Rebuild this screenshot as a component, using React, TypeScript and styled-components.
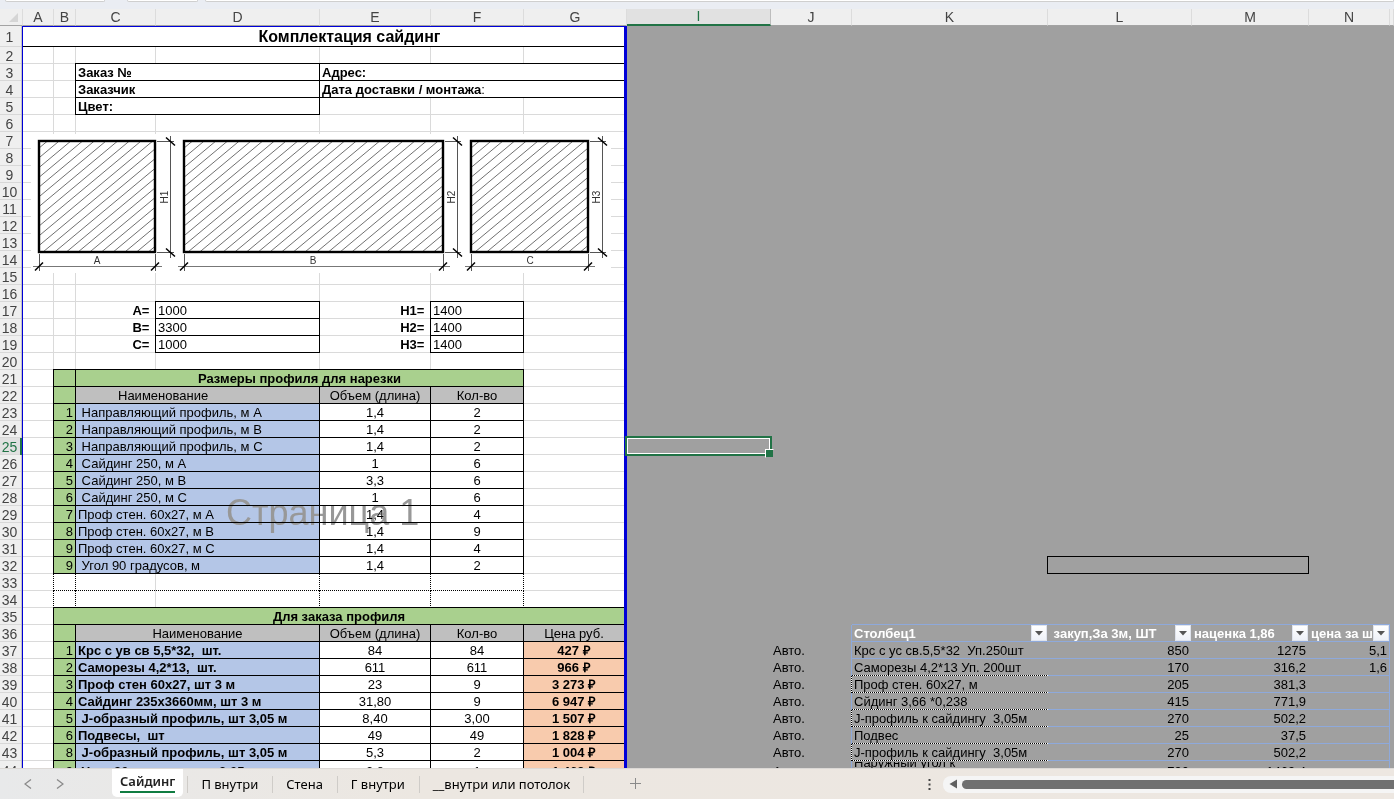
import React from 'react';
import styled, { createGlobalStyle, css } from 'styled-components';

const GlobalStyle = createGlobalStyle`
  * { box-sizing: border-box; }
  body { margin: 0; background: #a0a0a0; }
  button { font: inherit; padding: 0; border: 0; background: none; cursor: pointer; }
`;

const sheetFont = '"Liberation Sans", Arial, sans-serif';
const uiFont = '"Noto Sans", "Open Sans", sans-serif';

type Line = 'grid' | 'black' | 'dots' | 'blue' | 'page' | 'none';

const lineColor: Record<Line, string> = {
  grid: '#dadada',
  black: '#000',
  dots: 'transparent',
  blue: '#8ea9db',
  page: '#0000d8',
  none: 'transparent',
};

const fills = {
  green: '#a9d08e',
  grey: '#bfbfbf',
  sky: '#b4c6e7',
  peach: '#f8cbad',
  white: '#fff',
  outside: '#a0a0a0',
};

/* ---------- layout ---------- */

const Page = styled.div`
  display: flex;
  flex-direction: column;
  height: 100vh;
  overflow: hidden;
  font-family: ${sheetFont};
  color: #000;
`;

const FormulaStrip = styled.div`
  display: flex;
  flex: none;
  gap: 7px;
  height: 9px;
  padding-left: 5px;
  background: #eaedf3;
`;

const StripBox = styled.div<{ $width?: number; $after?: number }>`
  flex: ${(p) => (p.$width ? 'none' : '1')};
  width: ${(p) => (p.$width ? `${p.$width}px` : 'auto')};
  margin-right: ${(p) => p.$after ?? 0}px;
  height: 2px;
  background: #fff;
  border: 1px solid #cfcfcf;
  border-top: 0;
  border-radius: 0 0 4px 4px;
`;

const Sheet = styled.main`
  position: relative;
  flex: 1;
  min-height: 0;
  overflow: hidden;
  background: ${fills.outside};
`;

const Grid = styled.table`
  width: 100%;
  min-width: 1392px;
  table-layout: fixed;
  border-collapse: separate;
  border-spacing: 0;
  font-size: 13px;
  line-height: 15px;
`;

const Col = styled.col<{ $width?: number }>`
  width: ${(p) => (p.$width ? `${p.$width}px` : 'auto')};
`;

const Row = styled.tr<{ $height?: number }>`
  height: ${(p) => p.$height ?? 17}px;
`;

const ColumnHead = styled.th<{ $active?: boolean }>`
  height: 17px;
  padding: 0;
  font-size: 14px;
  line-height: 15px;
  font-weight: 400;
  color: ${(p) => (p.$active ? '#217346' : '#444')};
  background: ${(p) => (p.$active ? '#e1e1e1' : '#efefef')};
  border-right: 1px solid ${(p) => (p.$active ? '#bdbdbd' : '#dcdcdc')};
  border-bottom: ${(p) => (p.$active ? '2px solid #217346' : '1px solid #a3a3a3')};
`;

const RowHead = styled.th<{ $active?: boolean }>`
  padding: 1px 3px 0 0;
  font-size: 14px;
  font-weight: 400;
  text-align: center;
  color: ${(p) => (p.$active ? '#217346' : '#444')};
  background: ${(p) => (p.$active ? '#e1e1e1' : '#efefef')};
  border-right: 1px solid ${lineColor.page};
  box-shadow: ${(p) => (p.$active ? 'inset -2px 0 #217346' : 'inset -1px 0 #c4c4c4')}, inset 0 -1px #d8d8d8;
`;

/* Cell edges are painted as background layers so that crossing lines meet squarely */
const bottomEdge = (line: Line) =>
  line === 'dots'
    ? 'repeating-linear-gradient(90deg, #000 0 1px, #fff 1px 2px) left bottom / 100% 1px no-repeat border-box'
    : `linear-gradient(${lineColor[line]}, ${lineColor[line]}) left bottom / 100% 1px no-repeat border-box`;

const rightEdge = (line: Line) =>
  line === 'dots'
    ? 'repeating-linear-gradient(0deg, #000 0 1px, #fff 1px 2px) right top / 1px 100% no-repeat border-box'
    : `linear-gradient(${lineColor[line]}, ${lineColor[line]}) right top / ${line === 'page' ? 3 : 1}px 100% no-repeat border-box`;

const cornerDot = 'linear-gradient(#000, #000) right bottom / 1px 1px no-repeat border-box';

interface CellLook {
  $right?: Line;
  $bottom?: Line;
  $top?: Line;
  $corner?: boolean;
  $fill?: keyof typeof fills;
  $align?: 'left' | 'center' | 'right';
  $bold?: boolean;
  $indent?: number;
}

const edges = ({ $right = 'grid', $bottom = 'grid', $corner, $fill = 'white' }: CellLook) => {
  const pair =
    $right !== 'page' && $bottom === 'black'
      ? [bottomEdge($bottom), rightEdge($right)]
      : [rightEdge($right), bottomEdge($bottom)];
  const fill = `linear-gradient(${fills[$fill]}, ${fills[$fill]}) border-box`;
  return [...($corner ? [cornerDot] : []), ...pair, fill].join(', ');
};

const Cell = styled.td<CellLook>`
  padding: 1px 2px 0 ${(p) => p.$indent ?? 2}px;
  white-space: pre;
  overflow: hidden;
  vertical-align: middle;
  text-align: ${(p) => p.$align ?? 'left'};
  font-weight: ${(p) => (p.$bold ? 700 : 400)};
  border: 0 solid transparent;
  border-right-width: ${(p) => (p.$right === 'page' ? 3 : 1)}px;
  border-bottom-width: 1px;
  background: ${edges};
  background-origin: border-box;
  ${(p) => p.$top && css`box-shadow: inset 0 1px ${lineColor[p.$top]};`}
`;

const Title = styled(Cell)`
  font-size: 16px;
  line-height: 18px;
`;

const Regular = styled.span`
  font-weight: 400;
`;

const SelectedCell = styled.td`
  position: relative;
  z-index: 3;
  padding: 0;
`;

const Selection = styled.div`
  position: absolute;
  inset: -2px -1px -1px -2px;
  border: 2px solid #217346;
  box-shadow: inset 0 0 0 1px #fff;

  &::after {
    content: '';
    position: absolute;
    right: -4px;
    bottom: -4px;
    width: 7px;
    height: 7px;
    background: #217346;
    border: 1px solid #fff;
    border-right-color: ${fills.outside};
    border-bottom-color: ${fills.outside};
  }
`;

const FilterCell = styled(Cell)`
  padding: 0;
`;

const FilterHead = styled.div`
  display: flex;
  height: 16px;
  padding-left: 2px;
  line-height: 17px;
  color: #fff;
`;

const FilterLabel = styled.span`
  flex: 1;
  min-width: 0;
  overflow: hidden;
`;

const FilterButton = styled.button`
  display: grid;
  place-items: center;
  flex: none;
  width: 16px;
  height: 16px;
  background: linear-gradient(#fff, #eef1f8);
  border: 1px solid #dfe3ec;
`;

const Wrapped = styled.div`
  display: flex;
  align-items: center;
  height: 18px;
  line-height: 16px;
  overflow: hidden;
`;

const Drawing = styled.svg`
  position: absolute;
  left: 31px;
  top: 125px;
  background: #fff;
`;

const Watermark = styled.div`
  position: absolute;
  left: 226px;
  top: 483px;
  font-size: 36px;
  line-height: 42px;
  color: #989898;
  mix-blend-mode: darken;
  pointer-events: none;
`;

/* ---------- bottom bar ---------- */

const TabBar = styled.nav`
  display: flex;
  flex: none;
  align-items: flex-start;
  height: 31px;
  background: linear-gradient(90deg, #e8e9ea, #ece7e1 30%, #ede7e1);
  border-top: 1px solid #dcd9d6;
  font-family: ${uiFont};
  font-size: 13px;
  color: #333;
`;

const NavButtons = styled.div`
  display: flex;
  width: 112px;
  padding-left: 12px;
`;

const BarButton = styled.button<{ $width: number }>`
  display: grid;
  place-items: center;
  width: ${(p) => p.$width}px;
  height: 29px;
  color: #8a8a8a;
`;

const ActiveTab = styled.button`
  height: 28px;
  padding: 0 8px;
  margin-right: 4px;
  background: #fff;
  border-radius: 0 0 5px 5px;
  font-weight: 600;
  color: #222;
`;

const ActiveLabel = styled.span`
  display: block;
  height: 22px;
  margin-bottom: 2px;
  line-height: 20px;
  border-bottom: 2px solid #107c41;
`;

const Tab = styled.button`
  position: relative;
  height: 30px;
  padding: 0 14px;
  line-height: 30px;

  &::before,
  &:last-of-type::after {
    content: '';
    position: absolute;
    top: 7px;
    left: 0;
    width: 1px;
    height: 17px;
    background: #cfccc8;
  }
  &:last-of-type::after {
    left: auto;
    right: 0;
  }
`;

const Tabs = styled.div`
  display: flex;
`;

const AddSheet = styled.div`
  flex: 1;
  padding-left: 36px;
`;

const ScrollArea = styled.div`
  display: flex;
  align-items: center;
  width: 479px;
  height: 30px;
`;

const Track = styled.div`
  display: flex;
  align-items: center;
  flex: 1;
  gap: 5px;
  height: 17px;
  padding-left: 6px;
  background: #f5f5f5;
  border-radius: 8px 0 0 8px;
`;

const Thumb = styled.div`
  flex: 1;
  height: 9px;
  background: #707070;
  border-radius: 5px 0 0 5px;
`;

/* ---------- data ---------- */

const columns = [
  { name: 'A', width: 31 },
  { name: 'B', width: 22 },
  { name: 'C', width: 80 },
  { name: 'D', width: 164 },
  { name: 'E', width: 111 },
  { name: 'F', width: 93 },
  { name: 'G', width: 103 },
  { name: 'I', width: 144 },
  { name: 'J', width: 81 },
  { name: 'K', width: 196 },
  { name: 'L', width: 144 },
  { name: 'M', width: 117 },
  { name: 'N', width: 81 },
];

const orderLabels: Record<number, string> = { 3: 'Заказ №', 4: 'Заказчик', 5: 'Цвет:' };

const sizes: Record<number, [string, string, string, string]> = {
  17: ['A= ', '1000', 'H1= ', '1400'],
  18: ['B= ', '3300', 'H2= ', '1400'],
  19: ['C= ', '1000', 'H3= ', '1400'],
};

const cuts = [
  ['1', ' Направляющий профиль, м A', '1,4', '2'],
  ['2', ' Направляющий профиль, м B', '1,4', '2'],
  ['3', ' Направляющий профиль, м C', '1,4', '2'],
  ['4', ' Сайдинг 250, м A', '1', '6'],
  ['5', ' Сайдинг 250, м B', '3,3', '6'],
  ['6', ' Сайдинг 250, м C', '1', '6'],
  ['7', 'Проф стен. 60x27, м A', '1,4', '4'],
  ['8', 'Проф стен. 60x27, м B', '1,4', '9'],
  ['9', 'Проф стен. 60x27, м C', '1,4', '4'],
  ['9', ' Угол 90 градусов, м', '1,4', '2'],
];

const order = [
  ['1', 'Крс с ув св 5,5*32,  шт.', '84', '84', '427 ₽'],
  ['2', 'Саморезы 4,2*13,  шт.', '611', '611', '966 ₽'],
  ['3', 'Проф стен 60x27, шт 3 м', '23', '9', '3 273 ₽'],
  ['4', 'Сайдинг 235x3660мм, шт 3 м', '31,80', '9', '6 947 ₽'],
  ['5', ' J-образный профиль, шт 3,05 м', '8,40', '3,00', '1 507 ₽'],
  ['6', 'Подвесы,  шт', '49', '49', '1 828 ₽'],
  ['8', ' J-образный профиль, шт 3,05 м', '5,3', '2', '1 004 ₽'],
  ['9', ' Угол 90 градусов, шт 3,05 м', '2,8', '1', '1 469 ₽'],
];

const prices = [
  ['Крс с ус св.5,5*32  Уп.250шт', '850', '1275', '5,1'],
  ['Саморезы 4,2*13 Уп. 200шт', '170', '316,2', '1,6'],
  ['Проф стен. 60x27, м', '205', '381,3', ''],
  ['Сйдинг 3,66 *0,238', '415', '771,9', ''],
  ['J-профиль к сайдингу  3,05м', '270', '502,2', ''],
  ['Подвес', '25', '37,5', ''],
  ['J-профиль к сайдингу  3,05м', '270', '502,2', ''],
  ['Наружный угол к\nсайдингу  3,05м', '790', '1469,4', ''],
];

const filters = ['Столбец1', ' закуп,За 3м, ШТ', 'наценка 1,86', 'цена за шт'];

/* ---------- row parts ---------- */

/* Cells of the printed page, columns A to G */
function PageCells({ n }: { n: number }) {
  const plainG = <Cell $right="page" />;

  if (n === 1)
    return (
      <Title colSpan={7} $top="page" $right="page" $bottom="black" $align="center" $bold $indent={54}>
        Комплектация сайдинг
      </Title>
    );

  if (n === 2)
    return (
      <>
        <Cell /><Cell $corner />
        <Cell $bottom="black" /><Cell $bottom="black" /><Cell $bottom="black" /><Cell $bottom="black" />
        <Cell $bottom="black" $right="page" />
      </>
    );

  if (orderLabels[n])
    return (
      <>
        <Cell /><Cell $right="black" />
        <Cell colSpan={2} $right="black" $bottom="black" $bold>{orderLabels[n]}</Cell>
        {n === 3 && <Cell colSpan={3} $right="page" $bottom="black" $bold>Адрес:</Cell>}
        {n === 4 && (
          <Cell colSpan={3} $right="page" $bottom="black" $bold>
            Дата доставки / монтажа<Regular>:</Regular>
          </Cell>
        )}
        {n === 5 && <><Cell /><Cell />{plainG}</>}
      </>
    );

  if (n === 16)
    return (
      <>
        <Cell /><Cell /><Cell $corner /><Cell $bottom="black" />
        <Cell $corner /><Cell $bottom="black" />{plainG}
      </>
    );

  if (sizes[n]) {
    const [a, av, h, hv] = sizes[n];
    return (
      <>
        <Cell /><Cell />
        <Cell $right="black" $align="right" $bold>{a}</Cell>
        <Cell $right="black" $bottom="black">{av}</Cell>
        <Cell $right="black" $align="right" $bold>{h}</Cell>
        <Cell $right="black" $bottom="black">{hv}</Cell>
        {plainG}
      </>
    );
  }

  if (n === 20)
    return (
      <>
        <Cell $corner />
        {['B', 'C', 'D', 'E', 'F'].map((c) => <Cell key={c} $bottom="black" />)}
        {plainG}
      </>
    );

  if (n === 21)
    return (
      <>
        <Cell $right="black" />
        <Cell $fill="green" $right="black" $bottom="black" />
        <Cell colSpan={4} $fill="green" $right="black" $bottom="black" $align="center" $bold>
          Размеры профиля для нарезки
        </Cell>
        {plainG}
      </>
    );

  if (n === 22)
    return (
      <>
        <Cell $right="black" />
        <Cell $fill="green" $right="black" $bottom="black" />
        <Cell colSpan={2} $fill="grey" $right="black" $bottom="black" $indent={42}>Наименование</Cell>
        <Cell $fill="grey" $right="black" $bottom="black" $align="center">Объем (длина)</Cell>
        <Cell $fill="grey" $right="black" $bottom="black" $align="center">Кол-во</Cell>
        {plainG}
      </>
    );

  if (n >= 23 && n <= 32) {
    const [no, name, len, qty] = cuts[n - 23];
    return (
      <>
        <Cell $right="black" />
        <Cell $fill="green" $right="black" $bottom="black" $align="right">{no}</Cell>
        <Cell colSpan={2} $fill="sky" $right="black" $bottom="black">{name}</Cell>
        <Cell $right="black" $bottom="black" $align="center">{len}</Cell>
        <Cell $right="black" $bottom="black" $align="center">{qty}</Cell>
        {plainG}
      </>
    );
  }

  if (n === 33 || n === 34) {
    const b: Line = n === 33 ? 'dots' : 'black';
    return (
      <>
        <Cell $right="dots" />
        <Cell $right="dots" $bottom={b} />
        <Cell $bottom={b} />
        <Cell $right="dots" $bottom={b} />
        <Cell $right="dots" $bottom={b} />
        <Cell $right="dots" $bottom={b} />
        <Cell $right="page" $bottom={n === 33 ? 'grid' : 'black'} />
      </>
    );
  }

  if (n === 35)
    return (
      <>
        <Cell $right="black" />
        <Cell colSpan={6} $fill="green" $right="page" $bottom="black" $align="center" $bold>
          Для заказа профиля
        </Cell>
      </>
    );

  if (n === 36)
    return (
      <>
        <Cell $right="black" />
        <Cell $fill="green" $right="black" $bottom="black" />
        <Cell colSpan={2} $fill="grey" $right="black" $bottom="black" $align="center">Наименование</Cell>
        <Cell $fill="grey" $right="black" $bottom="black" $align="center">Объем (длина)</Cell>
        <Cell $fill="grey" $right="black" $bottom="black" $align="center">Кол-во</Cell>
        <Cell $fill="grey" $right="page" $bottom="black" $align="center">Цена руб.</Cell>
      </>
    );

  if (n >= 37) {
    const [no, name, len, qty, price] = order[n - 37];
    return (
      <>
        <Cell $right="black" />
        <Cell $fill="green" $right="black" $bottom="black" $align="right">{no}</Cell>
        <Cell colSpan={2} $fill="sky" $right="black" $bottom="black" $bold>{name}</Cell>
        <Cell $right="black" $bottom="black" $align="center">{len}</Cell>
        <Cell $right="black" $bottom="black" $align="center">{qty}</Cell>
        <Cell $fill="peach" $right="page" $bottom="black" $align="center" $bold>{price}</Cell>
      </>
    );
  }

  return (
    <>
      {['A', 'B', 'C', 'D', 'E', 'F'].map((c) => <Cell key={c} />)}
      {plainG}
    </>
  );
}

const outside = { $fill: 'outside', $right: 'none', $bottom: 'none' } as const;

/* Cells to the right of the printed page, columns I to O */
function OutsideCells({ n }: { n: number }) {
  if (n === 25)
    return (
      <>
        <SelectedCell><Selection /></SelectedCell>
        <Cell colSpan={6} {...outside} />
      </>
    );

  if (n === 31 || n === 32)
    return (
      <>
        <Cell colSpan={3} {...outside} $corner $right={n === 32 ? 'black' : 'none'} />
        <Cell colSpan={2} {...outside} $bottom="black" $right={n === 32 ? 'black' : 'none'} />
        <Cell colSpan={2} {...outside} />
      </>
    );

  if (n === 35)
    return (
      <>
        <Cell colSpan={2} {...outside} />
        <Cell colSpan={4} {...outside} $bottom="blue" />
        <Cell {...outside} />
      </>
    );

  if (n === 36)
    return (
      <>
        <Cell {...outside} />
        <Cell {...outside} $right="blue" />
        {filters.map((label, i) => (
          <FilterCell key={label} {...outside} $bottom="blue" $right={i === 3 ? 'blue' : 'none'} $bold>
            <FilterHead>
              <FilterLabel>{label}</FilterLabel>
              <FilterButton type="button" aria-label={`Фильтр: ${label.trim()}`}>
                <svg width="8" height="5" viewBox="0 0 8 5">
                  <path d="M0 0h8L4 4.500z" fill="#555" />
                </svg>
              </FilterButton>
            </FilterHead>
          </FilterCell>
        ))}
        <Cell {...outside} />
      </>
    );

  if (n >= 37) {
    const [name, buy, markup, each] = prices[n - 37];
    const dottedSide = n === 39 || n === 41 || n === 43;
    return (
      <>
        <Cell {...outside} />
        <Cell {...outside} $right={dottedSide ? 'dots' : 'blue'}>Авто.</Cell>
        <Cell {...outside} $bottom={n === 37 ? 'blue' : 'dots'}>
          {n === 44 ? <Wrapped>{name}</Wrapped> : name}
        </Cell>
        <Cell {...outside} $bottom="blue" $align="right">{buy}</Cell>
        <Cell {...outside} $bottom="blue" $align="right">{markup}</Cell>
        <Cell {...outside} $bottom="blue" $right="blue" $align="right">{each}</Cell>
        <Cell {...outside} />
      </>
    );
  }

  return <Cell colSpan={7} {...outside} />;
}

/* ---------- wall drawing ---------- */

interface WallProps {
  x: number;
  w: number;
  label: string;
  labelX: number;
  height: string;
  dimX: number;
}

const wallTop = 7;
const wallBottom = 118;

function Wall({ x, w, label, labelX, height, dimX }: WallProps) {
  const right = x + w;
  const span = wallBottom - wallTop;
  const run = span * 1.2;
  const lines: number[] = [];
  for (let s = x + 4 - 11.7 * 12; s < right; s += 11.7) lines.push(s);
  return (
    <g fill="none" stroke="#555" strokeWidth="1">
      <clipPath id={`wall-${label}`}>
        <rect x={x} y={wallTop} width={w} height={span} />
      </clipPath>
      <g clipPath={`url(#wall-${label})`} stroke="#606060" strokeWidth="0.9">
        {lines.map((s) => (
          <path key={s} d={`M${s} ${wallBottom}L${s + run} ${wallTop}`} />
        ))}
      </g>
      <rect x={x} y={wallTop} width={w} height={span} stroke="#000" strokeWidth="2.400" />
      <path d={`M${x + 0.5} 120v17M${right + 0.5} 120v17`} />
      <path d={`M${x - 6} 132.500H${right + 7}`} stroke="#777" />
      <path d={`M${x - 4} 136.500l8-8M${right - 4} 136.500l8-8`} stroke="#000" strokeWidth="1.500" />
      <path d={`M${right + 2} 7.500H${dimX + 4}M${right + 2} 118.500H${dimX + 4}`} />
      <path d={`M${dimX + 0.5} 2V124`} />
      <path d={`M${dimX - 4} 3.500l9 8M${dimX - 4} 114.500l9 8`} stroke="#000" strokeWidth="1.500" />
      <text x={labelX} y="130" textAnchor="middle" fontSize="10" fill="#333" stroke="none">
        {label}
      </text>
      <text
        transform={`translate(${dimX - 2} 63) rotate(-90)`}
        textAnchor="middle"
        fontSize="10"
        fill="#333"
        stroke="none"
      >
        {height}
      </text>
    </g>
  );
}

const sheetTabs = ['П внутри', 'Стена', 'Г внутри', '__внутри или потолок'];

export default function App() {
  const rows = Array.from({ length: 44 }, (_, i) => i + 1);
  return (
    <Page>
      <GlobalStyle />
      <FormulaStrip>
        <StripBox $width={100} $after={15} />
        <StripBox $width={71} />
        <StripBox />
      </FormulaStrip>

      <Sheet>
        <Grid>
          <colgroup>
            <Col $width={23} />
            {columns.map((c) => <Col key={c.name} $width={c.width} />)}
            <Col />
          </colgroup>
          <thead>
            <Row>
              <ColumnHead aria-label="Выделить все">
                <svg width="22" height="14" viewBox="0 0 22 14" display="block">
                  <path d="M18 3v9H9z" fill="#d5d5d5" />
                </svg>
              </ColumnHead>
              {columns.map((c) => (
                <ColumnHead key={c.name} scope="col" $active={c.name === 'I'}>{c.name}</ColumnHead>
              ))}
              <ColumnHead />
            </Row>
          </thead>
          <tbody>
            {rows.map((n) => (
              <Row key={n} $height={n === 1 ? 21 : n === 44 ? 20 : 17}>
                <RowHead scope="row" $active={n === 25}>{n}</RowHead>
                <PageCells n={n} />
                <OutsideCells n={n} />
              </Row>
            ))}
          </tbody>
        </Grid>

        <Drawing width="580" height="139" viewBox="0 0 580 139" role="img" aria-label="Схема стен">
          <Wall x={8} w={116} label="A" labelX={66} height="H1" dimX={139} />
          <Wall x={153} w={259} label="B" labelX={282} height="H2" dimX={426} />
          <Wall x={440} w={117} label="C" labelX={499} height="H3" dimX={571} />
        </Drawing>
        <Watermark>Страница 1</Watermark>
      </Sheet>

      <TabBar>
        <NavButtons>
          <BarButton type="button" $width={32} aria-label="Назад">
            <svg width="8" height="10" viewBox="0 0 8 10" fill="none" stroke="currentColor" strokeWidth="1.300">
              <path d="M7 0.500L1 5l6 4.500" />
            </svg>
          </BarButton>
          <BarButton type="button" $width={32} aria-label="Вперёд">
            <svg width="8" height="10" viewBox="0 0 8 10" fill="none" stroke="currentColor" strokeWidth="1.300">
              <path d="M1 0.500L7 5L1 9.500" />
            </svg>
          </BarButton>
        </NavButtons>
        <ActiveTab type="button"><ActiveLabel>Сайдинг</ActiveLabel></ActiveTab>
        <Tabs>
          {sheetTabs.map((t) => <Tab key={t} type="button">{t}</Tab>)}
        </Tabs>
        <AddSheet>
          <BarButton type="button" $width={30} aria-label="Новый лист">
            <svg width="11" height="11" viewBox="0 0 11 11" stroke="currentColor">
              <path d="M5.500 0v11M0 5.500h11" />
            </svg>
          </BarButton>
        </AddSheet>
        <ScrollArea>
          <BarButton type="button" $width={28} aria-label="Размер полосы вкладок">
            <svg width="3" height="11" viewBox="0 0 3 11" fill="#444">
              <path d="M0.500 0h2v2h-2zM0.500 4.500h2v2h-2zM0.500 9h2v2h-2z" />
            </svg>
          </BarButton>
          <Track>
            <svg width="8" height="10" viewBox="0 0 8 10" fill="#606060">
              <path d="M8 0.500v9L0.500 5z" />
            </svg>
            <Thumb />
          </Track>
        </ScrollArea>
      </TabBar>
    </Page>
  );
}
